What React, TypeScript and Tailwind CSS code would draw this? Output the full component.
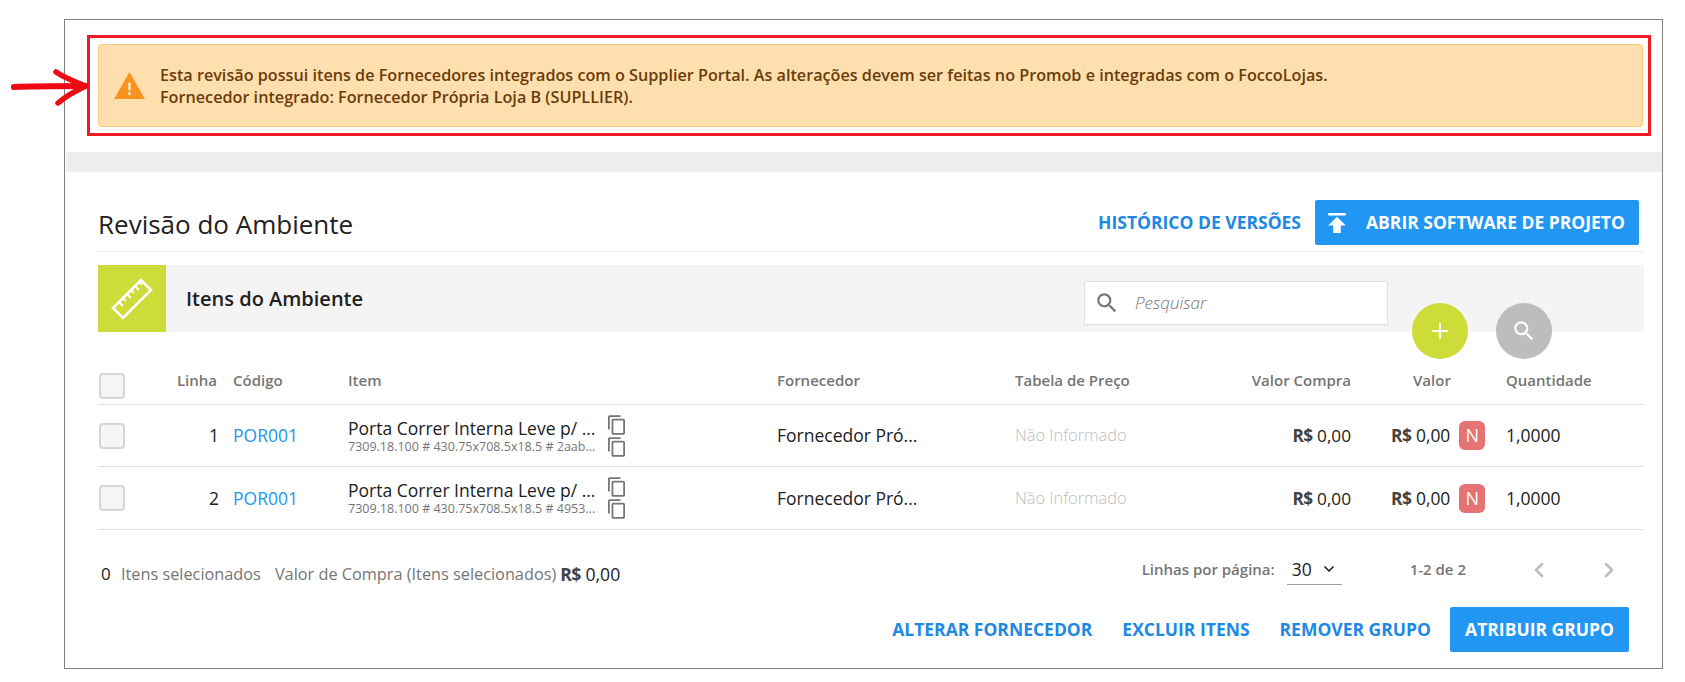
import { Plus, ChevronDown, ChevronLeft, ChevronRight } from "lucide-react";

const ROWS = [
  { line: 1, hash: "2aab...", height: "h-[62px]" },
  { line: 2, hash: "4953...", height: "h-[63px]" },
];

const COLUMNS = "grid-cols-[70px_49px_16px_115px_429px_238px_185px_151px_62px_93px_1fr]";

function CopyIcon() {
  return (
    <svg viewBox="2 1 19 22" className="h-[20px] w-[17px] fill-[#757575]" aria-hidden="true">
      <path d="M16 1H4c-1.1 0-2 .9-2 2v14h2V3h12V1zm3 4H8c-1.1 0-2 .9-2 2v14c0 1.1.9 2 2 2h11c1.1 0 2-.9 2-2V7c0-1.1-.9-2-2-2zm0 16H8V7h11v14z" />
    </svg>
  );
}

function SearchIcon({ className }: { className: string }) {
  return (
    <svg viewBox="0 0 24 24" className={className} aria-hidden="true">
      <path d="M15.5 14h-.79l-.28-.27A6.471 6.471 0 0 0 16 9.5 6.5 6.5 0 1 0 9.5 16c1.61 0 3.09-.59 4.23-1.57l.27.28v.79l5 4.99L20.49 19l-4.99-5zm-6 0C7.01 14 5 11.99 5 9.5S7.01 5 9.5 5 14 7.01 14 9.5 11.99 14 9.5 14z" />
    </svg>
  );
}

function RulerIcon() {
  return (
    <svg viewBox="0 0 42 42" className="h-[42px] w-[42px]" fill="none" stroke="white" strokeWidth="2.6" aria-hidden="true">
      <path d="M2 30 L30 2 L40 12 L12 40 Z" strokeLinejoin="miter" />
      <path d="M8 24l4 4M12 20l3 3M16 16l4 4M20 12l3 3M24 8l4 4M28 4l3 3" strokeWidth="1.8" />
    </svg>
  );
}

function Money({ className = "" }: { className?: string }) {
  return (
    <span className={`whitespace-nowrap text-[#212121] ${className}`}>
      <span className="font-bold tracking-[-0.5px] text-[#424242]">R$</span> 0,00
    </span>
  );
}

function Checkbox() {
  return <span className="block h-[26px] w-[26px] rounded-[4px] border-2 border-[#d5d5d5] bg-[#f5f5f5]" />;
}

function TextAction({ children }: { children: string }) {
  return <button type="button" className="text-[17.5px] font-bold whitespace-nowrap text-[#1e88e5]">{children}</button>;
}

export default function App() {
  return (
    <div className="relative h-[682px] w-[1685px] overflow-hidden bg-white font-['Open_Sans',sans-serif]">
      {/* hand drawn arrow */}
      <svg className="absolute top-[68px] left-[9px] z-10 h-[38px] w-[80px]" viewBox="0 0 80 38" fill="none" aria-hidden="true">
        <path d="M5 19 C25 18 50 18 76 18" stroke="#ee0a14" strokeWidth="6" strokeLinecap="round" />
        <path d="M47 4 C56 10 66 14 77 18 C66 23 56 29 49 35" stroke="#ee0a14" strokeWidth="5.5" strokeLinecap="round" strokeLinejoin="round" />
      </svg>

      <div className="mt-[19px] ml-[64px] flex h-[650px] w-[1599px] flex-col border border-[#808080] bg-white">
        <div className="mt-[15px] ml-[22px] h-[101px] w-[1564px] border-[3px] border-[#ed1c24] pt-[6px] pr-[5px] pl-[8px]">
          <div className="flex h-[83px] items-center gap-[15px] rounded-[3px] border border-[#fbcb7f] bg-[#ffdfae] pl-[15px] text-[16.2px] leading-[22px] font-semibold text-[#6b3c0b]">
            <svg viewBox="0 0 32 28" className="h-[27px] w-[31px] shrink-0" aria-hidden="true">
              <path d="M16 0 L32 28 H0 Z" fill="#f7931e" />
              <rect x="14.7" y="11" width="2.6" height="8" fill="#ffe9c8" />
              <rect x="14.7" y="21" width="2.6" height="2.8" fill="#ffe9c8" />
            </svg>
            <div>
              <p>Esta revisão possui itens de Fornecedores integrados com o Supplier Portal. As alterações devem ser feitas no Promob e integradas com o FoccoLojas.</p>
              <p>Fornecedor integrado: Fornecedor Própria Loja B (SUPLLIER).</p>
            </div>
          </div>
        </div>

        <div className="mt-[16px] ml-[1px] h-[20px] bg-[#eeeeee]" />

        <div className="relative ml-[33px] w-[1546px]">
          <div className="mt-[28px] flex h-[52px] items-start justify-between border-b border-[#eeeeee]">
            <h1 className="pt-[6px] text-[26px] leading-[36px] font-medium text-[#212121]">Revisão do Ambiente</h1>
            <div className="mr-[5px] flex items-center gap-[14px]">
              <TextAction>HISTÓRICO DE VERSÕES</TextAction>
              <button type="button" className="flex h-[45px] w-[324px] items-center gap-[20px] rounded-[2px] bg-[#2196f3] pl-[13px] text-[17.5px] font-bold whitespace-nowrap text-white">
                <svg viewBox="5 4 14 16" className="h-[20px] w-[18px] shrink-0 fill-white" aria-hidden="true">
                  <path d="M5 4v2h14V4H5zm0 10h4v6h6v-6h4l-7-7-7 7z" />
                </svg>
                ABRIR SOFTWARE DE PROJETO
              </button>
            </div>
          </div>

          <div className="mt-[13px] flex h-[67px] items-center bg-[#f4f4f4]">
            <div className="flex h-full w-[68px] items-center justify-center bg-[#cddc39]">
              <RulerIcon />
            </div>
            <h2 className="ml-[20px] w-[160px] shrink-0 text-[20px] font-semibold whitespace-nowrap text-[#212121]">Itens do Ambiente</h2>
            <div className="mt-[8px] ml-[738px] flex h-[44px] w-[304px] items-center border border-[#e0e0e0] bg-white pl-[9px]">
              <SearchIcon className="h-[26px] w-[26px] fill-[#757575]" />
              <span className="ml-[15px] text-[17px] font-light text-[#757575] italic">Pesquisar</span>
            </div>
          </div>

          <button type="button" className="absolute top-[131px] left-[1314px] flex h-[56px] w-[56px] items-center justify-center rounded-full bg-[#cddc39]">
            <Plus size={24} className="text-white" />
          </button>
          <button type="button" className="absolute top-[131px] left-[1398px] flex h-[56px] w-[56px] items-center justify-center rounded-full bg-[#bdbdbd]">
            <SearchIcon className="h-[26px] w-[26px] fill-white" />
          </button>

          <div className={`grid h-[73px] ${COLUMNS} items-center border-b border-[#e0e0e0] pt-[24px] text-[15px] font-semibold text-[#757575]`}>
            <span className="pt-[12px] pl-[1px]"><Checkbox /></span>
            <span className="text-right">Linha</span>
            <span />
            <span>Código</span>
            <span>Item</span>
            <span>Fornecedor</span>
            <span>Tabela de Preço</span>
            <span className="text-right">Valor Compra</span>
            <span />
            <span>Valor</span>
            <span>Quantidade</span>
          </div>

          {ROWS.map((row) => (
            <div key={row.line} className={`grid ${row.height} ${COLUMNS} items-center border-b border-[#e0e0e0] text-[17.5px] text-[#212121]`}>
              <span className="pl-[1px]"><Checkbox /></span>
              <span className="mr-[-2px] text-right">{row.line}</span>
              <span />
              <span className="text-[#2196f3]">POR001</span>
              <div className="flex items-center gap-[11px]">
                <div className="w-[249px]">
                  <p className="leading-[22px] whitespace-nowrap">Porta Correr Interna Leve p/ ...</p>
                  <p className="text-[12.5px] leading-[16px] whitespace-nowrap text-[#757575]">7309.18.100 # 430.75x708.5x18.5 # {row.hash}</p>
                </div>
                <div className="flex flex-col gap-[2px]">
                  <CopyIcon />
                  <CopyIcon />
                </div>
              </div>
              <span>Fornecedor Pró...</span>
              <span className="text-[16.4px] font-light text-[#bdbdbd]">Não Informado</span>
              <span className="text-right"><Money className="text-[17.2px]" /></span>
              <span />
              <div className="ml-[-22px] flex items-center gap-[9px]">
                <Money className="text-[17.4px]" />
                <span className="flex h-[29px] w-[26px] shrink-0 items-center justify-center rounded-[6px] bg-[#e57373] text-[18px] text-white">N</span>
              </div>
              <span>1,0000</span>
            </div>
          ))}

          <div className="mt-[24px] flex h-[40px] items-center text-[16.3px]">
            <span className="w-[11px] pl-[3px] text-[17px] font-medium text-[#212121]">0</span>
            <span className="ml-[12px] text-[#757575]">Itens selecionados</span>
            <span className="ml-[14px] text-[#757575]">Valor de Compra (Itens selecionados)</span>
            <Money className="ml-[4px] text-[17.6px]" />
            <div className="mb-[9px] ml-auto flex items-center text-[15px] font-semibold text-[#757575]">
              <span>Linhas por página:</span>
              <span className="ml-[12px] flex h-[30px] w-[55px] items-center gap-[9px] border-b border-[#9e9e9e] pl-[5px] text-[17.5px] font-normal text-[#212121]">
                30 <ChevronDown size={16} strokeWidth={2.5} />
              </span>
              <span className="ml-[68px]">1-2 de 2</span>
              <ChevronLeft size={24} strokeWidth={2.5} className="ml-[61px] text-[#bdbdbd]" />
              <ChevronRight size={24} strokeWidth={2.5} className="mr-[23px] ml-[46px] text-[#bdbdbd]" />
            </div>
          </div>

          <div className="mt-[13px] flex items-center justify-end gap-[30px] pr-[15px]">
            <TextAction>ALTERAR FORNECEDOR</TextAction>
            <TextAction>EXCLUIR ITENS</TextAction>
            <TextAction>REMOVER GRUPO</TextAction>
            <button type="button" className="ml-[-11px] h-[45px] w-[179px] rounded-[2px] bg-[#2196f3] text-[17.5px] font-bold text-white">ATRIBUIR GRUPO</button>
          </div>
        </div>
      </div>
    </div>
  );
}
